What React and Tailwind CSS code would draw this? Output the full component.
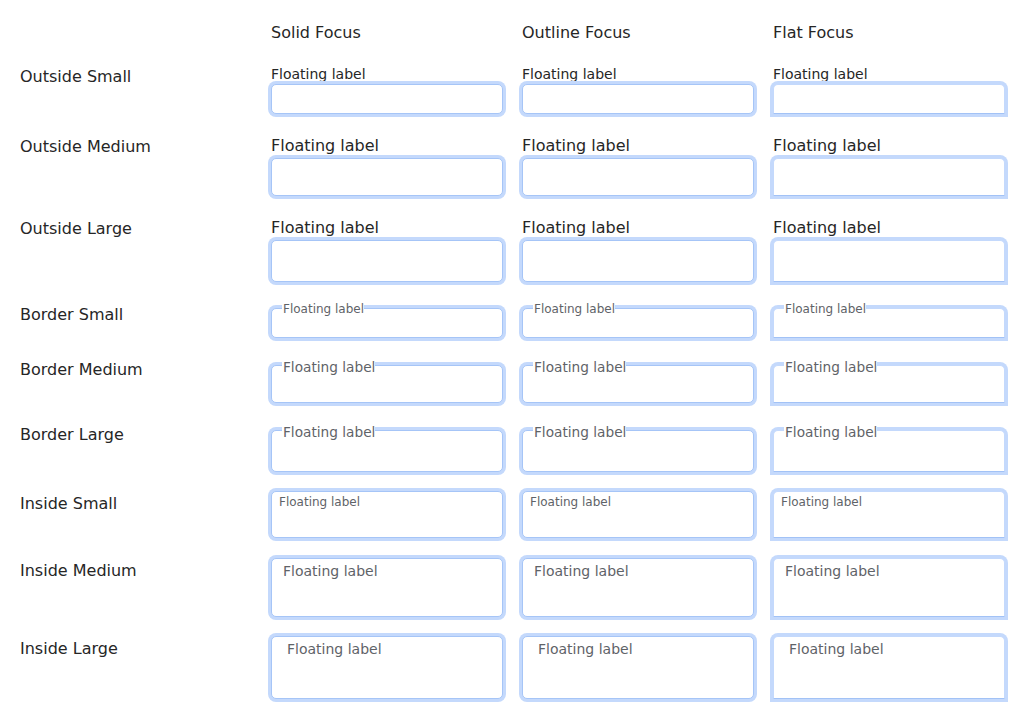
import React from "react";

const RING = "shadow-[0_0_0_3px_#c4d9fc]";

function Box({ flat, h, children }) {
  const cls = flat
    ? `relative bg-white w-[232px] rounded-t-[5px] border border-[#c4d9fc] border-b-[#a2c2f6] ${RING}`
    : `relative bg-white w-[232px] rounded-[5px] border border-[#a6c5f7] ${RING}`;
  return (
    <div className={cls} style={{ height: h }}>
      {children}
    </div>
  );
}

const ROWS = [
  { name: "Outside Small", kind: "outside", size: "s", mt: "mt-[23px]", lab: "pt-px", cell: "pt-0" },
  { name: "Outside Medium", kind: "outside", size: "m", mt: "mt-[22px]", lab: "pt-px", cell: "pt-0" },
  { name: "Outside Large", kind: "outside", size: "l", mt: "mt-[22px]", lab: "pt-px", cell: "pt-0" },
  { name: "Border Small", kind: "border", size: "s", mt: "mt-[22px]", lab: "pt-px", cell: "pt-[4px]" },
  { name: "Border Medium", kind: "border", size: "m", mt: "mt-[21px]", lab: "pt-px", cell: "pt-[6px]" },
  { name: "Border Large", kind: "border", size: "l", mt: "mt-[21px]", lab: "pt-px", cell: "pt-[6px]" },
  { name: "Inside Small", kind: "inside", size: "s", mt: "mt-[19px]", lab: "pt-[3px]", cell: "pt-0" },
  { name: "Inside Medium", kind: "inside", size: "m", mt: "mt-[20px]", lab: "pt-[3px]", cell: "pt-0" },
  { name: "Inside Large", kind: "inside", size: "l", mt: "mt-[19px]", lab: "pt-[3px]", cell: "pt-0" },
];

function Field({ kind, size, flat }) {
  if (kind === "outside") {
    const h = size === "s" ? 30 : size === "m" ? 38 : 42;
    const lc =
      size === "s"
        ? "text-[14px] leading-[16px] mb-[2px]"
        : "text-[16px] leading-[20px] mb-[2px]";
    return (
      <div className="flex flex-col">
        <div className={`${lc} text-[#262626] whitespace-nowrap`}>Floating label</div>
        <Box flat={flat} h={h} />
      </div>
    );
  }
  if (kind === "border") {
    const h = size === "s" ? 30 : size === "m" ? 38 : 42;
    const lc =
      size === "s"
        ? "text-[12px] leading-[14px] top-[-7px]"
        : "text-[13.7px] leading-[16px] top-[-7px]";
    return (
      <Box flat={flat} h={h}>
        <span
          className={`absolute left-[10px] pl-px bg-white whitespace-nowrap text-[#5f6368] ${lc}`}
        >
          Floating label
        </span>
      </Box>
    );
  }
  const h = size === "s" ? 47 : size === "m" ? 59 : 63;
  const lc =
    size === "s"
      ? "text-[12px] leading-[14px] top-[3px] left-[7px]"
      : size === "m"
      ? "text-[14px] leading-[16px] top-[4px] left-[11px]"
      : "text-[14px] leading-[16px] top-[4px] left-[15px]";
  return (
    <Box flat={flat} h={h}>
      <span className={`absolute whitespace-nowrap text-[#5f6368] ${lc}`}>
        Floating label
      </span>
    </Box>
  );
}

export default function App() {
  return (
    <div className="w-[1024px] h-[719px] bg-white font-['DejaVu_Sans',sans-serif] text-[#262626] overflow-hidden">
      <div className="flex flex-col pt-[23px]">
        <div className="flex text-[16px] leading-[20px]">
          <div className="w-[271px]" />
          <div className="w-[251px]">Solid Focus</div>
          <div className="w-[251px]">Outline Focus</div>
          <div className="w-[251px]">Flat Focus</div>
        </div>
        {ROWS.map((r) => (
          <div key={r.name} className={`flex items-start ${r.mt}`}>
            <div className={`w-[271px] pl-[20px] text-[16px] leading-[20px] ${r.lab}`}>
              {r.name}
            </div>
            <div className={`w-[251px] ${r.cell}`}>
              <Field kind={r.kind} size={r.size} />
            </div>
            <div className={`w-[251px] ${r.cell}`}>
              <Field kind={r.kind} size={r.size} />
            </div>
            <div className={`w-[251px] ${r.cell}`}>
              <Field kind={r.kind} size={r.size} flat />
            </div>
          </div>
        ))}
      </div>
    </div>
  );
}
